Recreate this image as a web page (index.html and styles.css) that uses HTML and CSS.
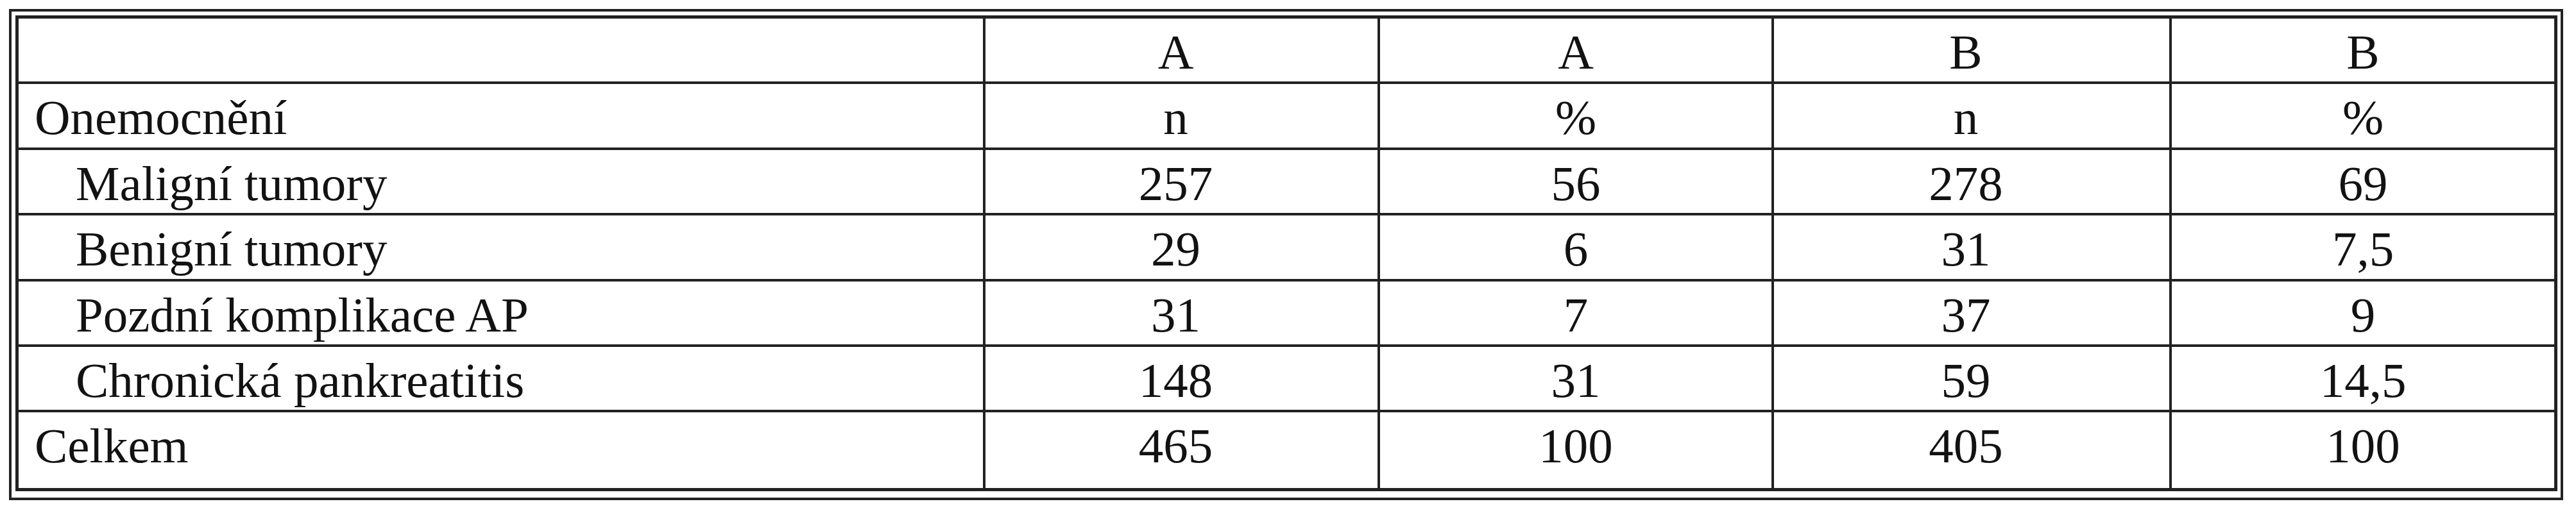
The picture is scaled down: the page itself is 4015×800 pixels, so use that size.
FILE: index.html
```html
<!DOCTYPE html>
<html lang="cs">
<head>
<meta charset="utf-8">
<title>Onemocnění</title>
<link rel="stylesheet" href="styles.css">
</head>
<body>
<div class="frame">
  <table class="data">
    <colgroup>
      <col class="c-label">
      <col class="c-a1">
      <col class="c-a2">
      <col class="c-b1">
      <col class="c-b2">
    </colgroup>
    <tbody>
      <tr class="row">
        <td class="label"></td>
        <td class="num shift">A</td>
        <td class="num">A</td>
        <td class="num shift">B</td>
        <td class="num last-col">B</td>
      </tr>
      <tr class="row">
        <td class="label">Onemocnění</td>
        <td class="num shift">n</td>
        <td class="num">%</td>
        <td class="num shift">n</td>
        <td class="num last-col">%</td>
      </tr>
      <tr class="row">
        <td class="label sub">Maligní tumory</td>
        <td class="num shift">257</td>
        <td class="num">56</td>
        <td class="num shift">278</td>
        <td class="num last-col">69</td>
      </tr>
      <tr class="row">
        <td class="label sub">Benigní tumory</td>
        <td class="num shift">29</td>
        <td class="num">6</td>
        <td class="num shift">31</td>
        <td class="num last-col">7,5</td>
      </tr>
      <tr class="row">
        <td class="label sub">Pozdní komplikace AP</td>
        <td class="num shift">31</td>
        <td class="num">7</td>
        <td class="num shift">37</td>
        <td class="num last-col">9</td>
      </tr>
      <tr class="row">
        <td class="label sub">Chronická pankreatitis</td>
        <td class="num shift">148</td>
        <td class="num">31</td>
        <td class="num shift">59</td>
        <td class="num last-col">14,5</td>
      </tr>
      <tr class="row total">
        <td class="label">Celkem</td>
        <td class="num shift">465</td>
        <td class="num">100</td>
        <td class="num shift">405</td>
        <td class="num last-col">100</td>
      </tr>
    </tbody>
  </table>
</div>
</body>
</html>
```

FILE: styles.css
```css
html, body {
  margin: 0;
  padding: 0;
  background: #ffffff;
}

body {
  font-family: "Liberation Serif", "Times New Roman", serif;
  color: #121212;
}

.frame {
  display: inline-block;
  margin: 14px 0 0 14px;
  border: 4px solid #232323;
  padding: 6px 5px 10px 6px;
  background: #ffffff;
}

.data {
  width: 3962px;
  table-layout: fixed;
  border-collapse: separate;
  border-spacing: 0;
  border: 5px solid #222222;
  font-size: 77px;
  line-height: 88px;
}

.c-label { width: 1507px; }
.c-a1 { width: 615px; }
.c-a2 { width: 614px; }
.c-b1 { width: 620px; }
.c-b2 { width: 596px; }

.row {
  height: 102.4px;
}

.row.total {
  height: 118px;
}

.data td {
  box-sizing: border-box;
  vertical-align: top;
  padding: 8px 0 0 0;
  border-right: 4px solid #222222;
  border-bottom: 4px solid #222222;
  white-space: nowrap;
}

.data td.last-col {
  border-right: none;
}

.row.total td {
  border-bottom: none;
}

.label {
  text-align: left;
  padding-left: 25px !important;
}

.label.sub {
  padding-left: 89px !important;
}

.num {
  text-align: center;
}

.num.shift {
  padding-right: 18px !important;
}
```
